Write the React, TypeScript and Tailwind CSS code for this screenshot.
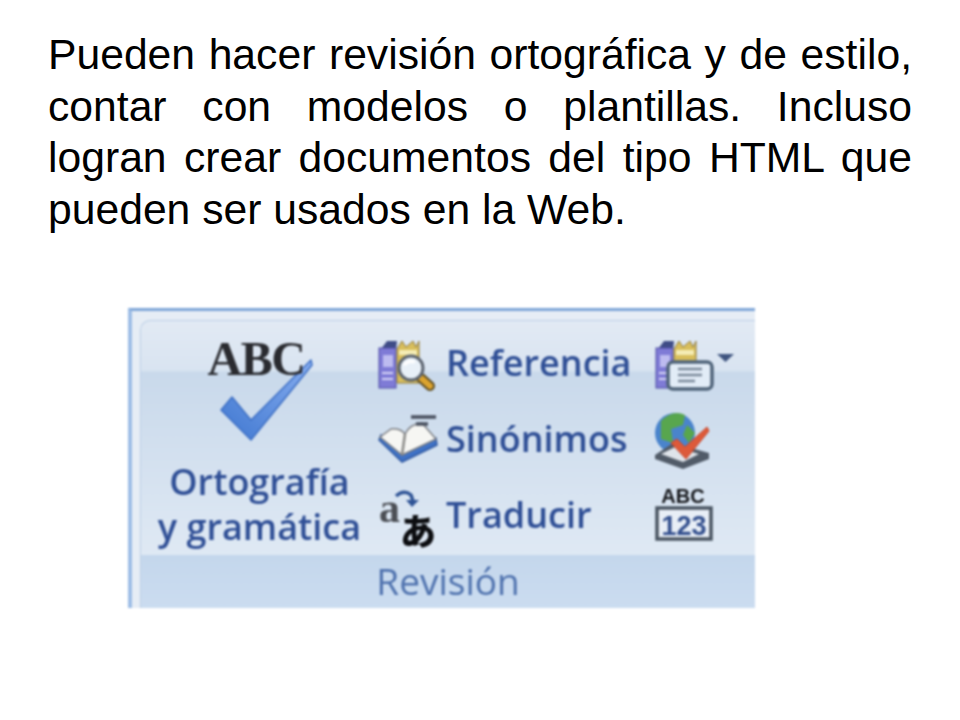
const labelFont = "font-['Open_Sans','Noto_Sans',sans-serif] font-semibold text-[#2f4f96]";

function PurpleBook() {
  return (
    <g>
      <path d="M3 16 L9 8 L19 8 L18 18 Z" fill="#3f4c86" />
      <rect x="1" y="15" width="17" height="40" fill="#7f7bd6" stroke="#4f4da4" strokeWidth="1" />
      <rect x="5" y="22" width="10" height="12" fill="#bdbbf0" />
      <path d="M4 40 L15 40 M4 46 L15 46" stroke="#d6d5f6" strokeWidth="2" />
    </g>
  );
}

function YellowBook({ bottom }: { bottom: number }) {
  return (
    <g>
      <path d={`M19 16 L24 8 L28 14 L35 8 L38 14 L41 8 L41 ${bottom} L19 ${bottom} Z`} fill="#d8be5c" stroke="#8f7a3c" strokeWidth="1" />
      <rect x="21" y="17" width="18" height="5" fill="#f4ecb4" />
    </g>
  );
}

function ResearchIcon() {
  return (
    <svg width="60" height="60" viewBox="0 0 60 60">
      <PurpleBook />
      <YellowBook bottom={50} />
      <path d="M43 45 L52 53" stroke="#5e4e24" strokeWidth="10" strokeLinecap="round" />
      <path d="M43 45 L52 53" stroke="#dba32e" strokeWidth="6" strokeLinecap="round" />
      <circle cx="33" cy="35" r="12" fill="#e8f0f8" stroke="#5c6470" strokeWidth="3" />
      <path d="M26 32 Q30 27 37 29" stroke="#fff" strokeWidth="3" fill="none" />
    </svg>
  );
}

function OpenBookIcon() {
  return (
    <svg width="60" height="60" viewBox="0 0 60 60">
      <path d="M1 31 L24 53 L59 36 L58 29 L24 44 L3 26 Z" fill="#3f72c6" stroke="#325aa2" strokeWidth="1.5" />
      <path d="M2 28 L13 20 Q22 19 27 25 Q32 15 44 14 L58 30 L24 46 Z" fill="#f6f6f3" stroke="#7d7f84" strokeWidth="1.5" />
      <path d="M27 25 L24 46" stroke="#8a8a88" strokeWidth="2.5" />
      <path d="M33 8 L58 8" stroke="#484f5e" strokeWidth="3.5" />
      <path d="M38 15 L50 15" stroke="#484f5e" strokeWidth="3.5" />
    </svg>
  );
}

function TranslateIcon() {
  return (
    <svg width="60" height="60" viewBox="0 0 60 60" className="overflow-visible">
      <text x="1" y="37" fontFamily="'Liberation Serif', serif" fontWeight="700" fontSize="42" fill="#4c4f55">a</text>
      <path d="M18 11 Q26 4 33 10 L35 16" stroke="#2f5496" strokeWidth="3.5" fill="none" />
      <path d="M28 15 L41 15 L34 22 Z" fill="#2f5496" />
      <text x="22" y="60" fontFamily="'Noto Sans CJK JP', sans-serif" fontWeight="900" fontSize="36" fill="#0c0d10">あ</text>
    </svg>
  );
}

function ResearchOptionsIcon() {
  return (
    <svg width="60" height="60" viewBox="0 0 60 60">
      <PurpleBook />
      <YellowBook bottom={32} />
      <rect x="13" y="29" width="44" height="27" rx="5" fill="#e2ecf7" stroke="#4f6379" strokeWidth="3.5" />
      <path d="M23 36 L47 36 M23 42 L47 42 M23 48 L40 48" stroke="#7b899a" strokeWidth="2.5" />
    </svg>
  );
}

function GlobeCheckIcon() {
  return (
    <svg width="60" height="60" viewBox="0 0 60 60">
      <circle cx="20" cy="24" r="20" fill="#4a84cc" />
      <path d="M6 12 Q18 0 30 6 L28 16 L16 20 L18 34 L6 30 Z" fill="#58a64e" />
      <path d="M32 16 L40 24 L34 34 L28 26 Z" fill="#58a64e" />
      <path d="M0 46 L18 34 L54 44 L54 50 L28 60 L0 50 Z" fill="#515b68" />
      <path d="M6 45 L20 38 L44 45 L28 53 Z" fill="#dfe4ea" />
      <path d="M16 34 L22 30 L30 38 L52 18 L54 22 L31 50 Z" fill="#dd5a3a" stroke="#c7472c" strokeWidth="1" strokeLinejoin="round" />
    </svg>
  );
}

function WordCountIcon() {
  return (
    <svg width="60" height="60" viewBox="0 0 60 60">
      <text x="28" y="18" textAnchor="middle" fontFamily="'Liberation Sans', sans-serif" fontWeight="700" fontSize="20" fill="#16181c">ABC</text>
      <rect x="2" y="23" width="54" height="31" fill="#e8eef6" stroke="#4a5562" strokeWidth="3.5" />
      <text x="29" y="50" textAnchor="middle" fontFamily="'Liberation Sans', sans-serif" fontWeight="700" fontSize="27" fill="#34508e">123</text>
    </svg>
  );
}

function SpellingIcon() {
  return (
    <div className="relative h-[112px] w-[120px]">
      <svg width="120" height="112" viewBox="0 0 120 112" className="absolute top-0 left-0">
        <defs>
          <linearGradient id="check" x1="0" y1="1" x2="1" y2="0">
            <stop offset="0" stopColor="#3f77d0" />
            <stop offset="1" stopColor="#88aef0" />
          </linearGradient>
        </defs>
        <path d="M21 73 L32 60 L51 83 L111 23 L112 28 L51 103 Z" fill="url(#check)" stroke="#3d6fc4" strokeWidth="1.5" strokeLinejoin="round" />
      </svg>
      <span className="absolute top-[-6px] left-[8px] font-['Liberation_Serif',serif] text-[48px] leading-[56px] font-bold tracking-[-1.5px] text-[#2a2b30]">
        ABC
      </span>
    </div>
  );
}

function Row({ icon, label }: { icon: React.ReactNode; label: string }) {
  return (
    <div className="flex h-[76px] items-center gap-2">
      {icon}
      <span className={`${labelFont} text-[36px] leading-[44px]`}>{label}</span>
    </div>
  );
}

export default function App() {
  return (
    <div className="h-[720px] w-[960px] overflow-hidden bg-white">
      <p className="px-[48px] pt-[29px] text-justify font-['Liberation_Sans',Arial,sans-serif] text-[42.67px] leading-[51.7px] text-black">
        Pueden hacer revisión ortográfica y de estilo, contar con modelos o plantillas. Incluso logran crear documentos del tipo HTML que pueden ser usados en la Web.
      </p>

      <div className="mt-[72px] ml-[128px] flex h-[300px] w-[627px] flex-col overflow-hidden border-t-[3px] border-l-[4px] border-t-[#7fa6d8] border-l-[#9dbde6] bg-[#e6edf5] blur-[0.8px]">
        <div className="mt-[9px] ml-[8px] flex h-[235px] rounded-tl-[10px] border-t border-l border-[#bccfe6] bg-[linear-gradient(180deg,#e2eaf4_0%,#d9e4f1_21%,#c9d9eb_22%,#dfe9f4_100%)]">
          <div className="flex w-[237px] flex-col items-center pt-[16px]">
            <SpellingIcon />
            <div className={`${labelFont} mt-[10px] text-center text-[36px] leading-[45px]`}>
              Ortografía
              <br />
              y gramática
            </div>
          </div>
          <div className="w-[277px] pt-[4px]">
            <Row icon={<ResearchIcon />} label="Referencia" />
            <Row icon={<OpenBookIcon />} label="Sinónimos" />
            <Row icon={<TranslateIcon />} label="Traducir" />
          </div>
          <div className="pt-[4px]">
            <div className="flex h-[76px] items-center">
              <ResearchOptionsIcon />
              <svg width="18" height="10" viewBox="0 0 18 10" className="mb-[10px] ml-[2px]">
                <path d="M0 1 L17 1 L8.5 9 Z" fill="#3f5580" />
              </svg>
            </div>
            <div className="flex h-[76px] items-center">
              <GlobeCheckIcon />
            </div>
            <div className="flex h-[76px] items-center">
              <WordCountIcon />
            </div>
          </div>
        </div>
        <div className="ml-[8px] flex h-[53px] items-center justify-center border-l border-[#bccfe6] bg-[linear-gradient(180deg,#c4d7ec_0%,#cbdcf0_100%)]">
          <span className="font-['Open_Sans','Noto_Sans',sans-serif] text-[37px] leading-[44px] text-[#4f72ae]">Revisión</span>
        </div>
      </div>
    </div>
  );
}
